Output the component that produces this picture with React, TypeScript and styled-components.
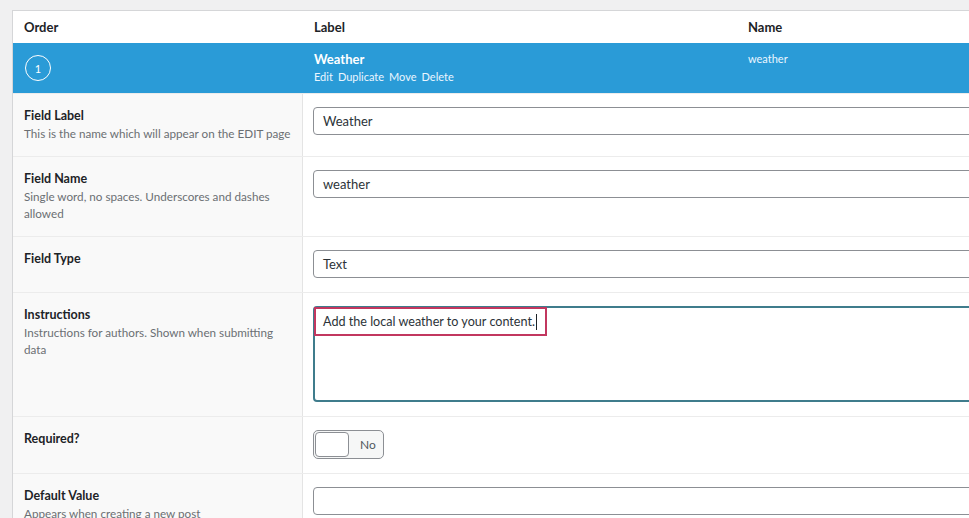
import React from 'react';
import styled, { createGlobalStyle } from 'styled-components';

const GlobalStyle = createGlobalStyle`
  html, body {
    margin: 0;
    background: #f0f0f1;
    overflow: hidden;
  }
  body {
    font-family: Lato, "Noto Sans", sans-serif;
    color: #1d2327;
  }
`;

const Page = styled.div`
  padding: 10px 0 0 12px;
`;

const Panel = styled.div`
  width: 1100px;
  background: #fff;
  border-top: 1px solid #d5d6d8;
  border-left: 1px solid #d5d6d8;
`;

const ColumnRow = styled.div`
  display: grid;
  grid-template-columns: 290px 434px 1fr;
`;

const HeaderRow = styled(ColumnRow)`
  height: 32px;
  align-items: center;
  font-size: 13px;
  font-weight: 700;
  color: #1d2327;

  & > div {
    padding: 0 11px;
  }
`;

const HandleRow = styled(ColumnRow)`
  height: 50px;
  background: #2a9bd7;
  color: #fff;
`;

const HandleCell = styled.div<{ $center?: boolean }>`
  padding: ${(p) => (p.$center ? '0 12px' : '7px 11px 0')};
  display: flex;
  flex-direction: column;
  justify-content: ${(p) => (p.$center ? 'center' : 'flex-start')};
`;

const OrderBadge = styled.div`
  width: 24px;
  height: 24px;
  border: 1px solid #fff;
  border-radius: 50%;
  display: flex;
  align-items: center;
  justify-content: center;
  font-size: 11px;
`;

const HandleTitle = styled.div`
  font-size: 13px;
  font-weight: 700;
  line-height: 18px;
`;

const HandleName = styled.div`
  font-size: 11px;
  line-height: 18px;
  color: #eaf6ff;
`;

const RowActions = styled.div`
  display: flex;
  gap: 5px;
  font-size: 11px;
  line-height: 17px;

  a {
    color: #eaf6ff;
    text-decoration: none;
  }
`;

const SettingsRow = styled.div`
  display: grid;
  grid-template-columns: 290px 1fr;
  border-top: 1px solid #ececec;
`;

const LabelCell = styled.div`
  background: #f9f9f9;
  border-right: 1px solid #e4e4e4;
  padding: 13px 6px 14px 11px;
`;

const FieldTitle = styled.div`
  font-size: 12.5px;
  font-weight: 700;
  line-height: 18px;
  color: #1d2327;
`;

const FieldHint = styled.div`
  font-size: 11.7px;
  line-height: 17px;
  color: #6b6f73;
  padding-right: 20px;

  &.wide {
    padding-right: 0;
  }
`;

const InputCell = styled.div`
  padding: 13px 10px 14px;
`;

const TextInput = styled.div`
  box-sizing: border-box;
  height: 28px;
  border: 1px solid #8c8f94;
  border-radius: 4px;
  background: #fff;
  padding: 0 9px;
  display: flex;
  align-items: center;
  font-size: 13px;
  color: #2c3338;
`;

const TextArea = styled.div`
  box-sizing: border-box;
  height: 96px;
  border: 2px solid #3f7c8c;
  border-radius: 4px;
  background: #fff;
  position: relative;
`;

const Highlight = styled.div`
  position: absolute;
  left: -1px;
  top: -1px;
  height: 29px;
  box-sizing: border-box;
  border: 2px solid #c2375f;
  padding: 0 8px 0 7px;
  display: flex;
  align-items: center;
  white-space: nowrap;
  font-size: 12.6px;
  color: #2c3338;
`;

const Caret = styled.span`
  display: inline-block;
  width: 1px;
  height: 16px;
  background: #1d2327;
  margin-left: 1px;
`;

const Toggle = styled.div`
  box-sizing: border-box;
  width: 71px;
  height: 29px;
  border: 1px solid #8c8f94;
  border-radius: 5px;
  background: #f6f7f7;
  display: flex;
  align-items: center;
  padding: 1px;
  gap: 11px;
  font-size: 12px;
  color: #50575e;
`;

const ToggleKnob = styled.div`
  box-sizing: border-box;
  width: 34px;
  height: 25px;
  border: 1px solid #8c8f94;
  border-radius: 4px;
  background: #fff;
`;

const App = () => {
  return (
    <>
      <GlobalStyle />
      <Page>
        <Panel>
          <HeaderRow>
            <div>Order</div>
            <div>Label</div>
            <div>Name</div>
          </HeaderRow>
          <HandleRow>
            <HandleCell $center>
              <OrderBadge>1</OrderBadge>
            </HandleCell>
            <HandleCell>
              <HandleTitle>Weather</HandleTitle>
              <RowActions>
                <a href="#">Edit</a>
                <a href="#">Duplicate</a>
                <a href="#">Move</a>
                <a href="#">Delete</a>
              </RowActions>
            </HandleCell>
            <HandleCell>
              <HandleName>weather</HandleName>
            </HandleCell>
          </HandleRow>

          <SettingsRow>
            <LabelCell>
              <FieldTitle>Field Label</FieldTitle>
              <FieldHint className="wide">This is the name which will appear on the EDIT page</FieldHint>
            </LabelCell>
            <InputCell>
              <TextInput>Weather</TextInput>
            </InputCell>
          </SettingsRow>

          <SettingsRow>
            <LabelCell>
              <FieldTitle>Field Name</FieldTitle>
              <FieldHint>Single word, no spaces. Underscores and dashes allowed</FieldHint>
            </LabelCell>
            <InputCell>
              <TextInput>weather</TextInput>
            </InputCell>
          </SettingsRow>

          <SettingsRow>
            <LabelCell>
              <FieldTitle>Field Type</FieldTitle>
            </LabelCell>
            <InputCell>
              <TextInput>Text</TextInput>
            </InputCell>
          </SettingsRow>

          <SettingsRow>
            <LabelCell>
              <FieldTitle>Instructions</FieldTitle>
              <FieldHint>Instructions for authors. Shown when submitting data</FieldHint>
            </LabelCell>
            <InputCell>
              <TextArea>
                <Highlight>
                  Add the local weather to your content.
                  <Caret />
                </Highlight>
              </TextArea>
            </InputCell>
          </SettingsRow>

          <SettingsRow>
            <LabelCell>
              <FieldTitle>Required?</FieldTitle>
            </LabelCell>
            <InputCell>
              <Toggle>
                <ToggleKnob />
                No
              </Toggle>
            </InputCell>
          </SettingsRow>

          <SettingsRow>
            <LabelCell>
              <FieldTitle>Default Value</FieldTitle>
              <FieldHint>Appears when creating a new post</FieldHint>
            </LabelCell>
            <InputCell>
              <TextInput />
            </InputCell>
          </SettingsRow>
        </Panel>
      </Page>
    </>
  );
};

export default App;
